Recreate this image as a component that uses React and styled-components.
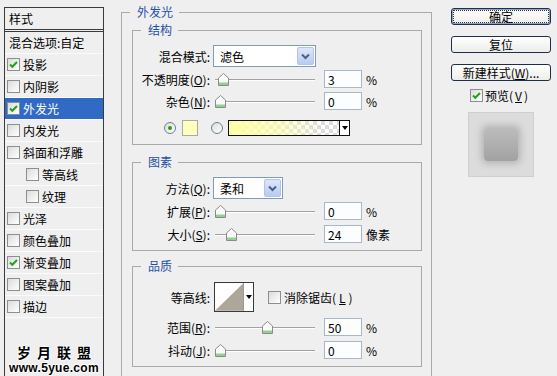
import React from 'react';
import styled, { createGlobalStyle, css } from 'styled-components';

const GlobalStyle = createGlobalStyle`
  body { margin: 0; background: #efefef; }
  * { box-sizing: border-box; }
`;

const Dialog = styled.div`
  width: 557px;
  height: 376px;
  overflow: hidden;
  display: flex;
  align-items: flex-start;
  background: #efefef;
  font-family: "Noto Sans CJK SC", "DejaVu Sans", sans-serif;
  font-size: 12px;
  color: #000;
`;

// left list of styles
const StyleList = styled.div`
  margin: 7px 0 0 4px;
  width: 100px;
  height: 380px;
  flex-shrink: 0;
  border: 1px solid #3a3a3a;
  display: flex;
  flex-direction: column;
`;

const ListHeader = styled.div`
  height: 24px;
  padding-left: 4px;
  display: flex;
  align-items: center;
  border-bottom: 3px double #3a3a3a;
`;

const ListRow = styled.div`
  height: 22px;
  display: flex;
  align-items: center;
  gap: 3px;
  padding-left: ${p => p.$pad}px;
  border-bottom: 1px solid #fbfbfb;
  ${p => p.$selected && css`
    background: #316ac5;
    color: #fff;
  `}
`;

const Watermark = styled.div`
  margin-top: 26px;
  text-align: center;
  line-height: 16px;
  font-weight: 700;
  text-shadow: 1px 0 0 #fff, -1px 0 0 #fff, 0 1px 0 #fff, 0 -1px 0 #fff;
`;

const WmTitle = styled.div`
  font-size: 14px;
  letter-spacing: 6px;
  padding-left: 6px;
`;

const WmUrl = styled.div`
  font-family: "Liberation Sans", Arial, sans-serif;
  font-size: 12px;
  letter-spacing: 0.3px;
`;

const Box = styled.span`
  width: 13px;
  height: 13px;
  flex-shrink: 0;
  display: inline-flex;
  align-items: center;
  justify-content: center;
  border: 1px solid #8a8f96;
  background: linear-gradient(135deg, #dcdcd6, #ffffff);
`;

function Check({ on }) {
  return (
    <Box>
      {on && (
        <svg width="11" height="11" viewBox="0 0 11 11">
          <path d="M2 5.5 L4.3 7.8 L9 3" fill="none" stroke="#21a121" strokeWidth="2" />
        </svg>
      )}
    </Box>
  );
}

// main panel
const Main = styled.div`
  margin-left: 17px;
  width: 311px;
  flex-shrink: 0;
`;

const Group = styled.fieldset`
  margin: ${p => p.$top}px 0 0;
  padding: 0;
  min-width: 0;
  border: 1px solid #a9a9a9;
`;

const Legend = styled.legend`
  margin-left: 8px;
  padding: 0 6px 0 7px;
  line-height: 14px;
  color: #1f4fa5;
`;

const GroupBody = styled.div`
  padding: ${p => p.$pad};
`;

const FieldRow = styled.div`
  display: flex;
  align-items: center;
  height: ${p => p.$h}px;
  margin-top: ${p => p.$mt || 0}px;
`;

const Label = styled.span`
  width: 77px;
  flex-shrink: 0;
  text-align: right;
  white-space: nowrap;
`;

const SelectBox = styled.div`
  margin-left: 3px;
  width: ${p => p.$w}px;
  height: 22px;
  border: 1px solid #7f9db9;
  background: #fff;
  display: flex;
  align-items: center;
  justify-content: space-between;
  padding: 1px 1px 1px 6px;
`;

const SelectArrow = styled.span`
  width: 17px;
  height: 18px;
  border: 1px solid #b4c4e6;
  border-radius: 2px;
  background: linear-gradient(#dde6fb, #b9cbf2);
  display: flex;
  align-items: center;
  justify-content: center;
`;

function Select({ w, children }) {
  return (
    <SelectBox $w={w}>
      <span>{children}</span>
      <SelectArrow>
        <svg width="9" height="7" viewBox="0 0 9 7">
          <path d="M1 1.5 L4.5 5 L8 1.5" fill="none" stroke="#4d6185" strokeWidth="2" />
        </svg>
      </SelectArrow>
    </SelectBox>
  );
}

const Track = styled.div`
  position: relative;
  margin-left: ${p => p.$ml || 5}px;
  width: ${p => p.$w || 100}px;
  height: 18px;
  flex-shrink: 0;
  &::before {
    content: "";
    position: absolute;
    left: 0;
    right: 0;
    top: 9px;
    border-top: 1px solid #a2a2a2;
    border-bottom: 1px solid #fff;
  }
`;

const Thumb = styled.svg`
  position: absolute;
  top: 3px;
`;

function Slider({ value, max, ml, w }) {
  const left = Math.round((value / max) * 94);
  return (
    <Track $ml={ml} $w={w}>
      <Thumb width="11" height="13" viewBox="0 0 11 13" style={{ left }}>
        <path d="M5.5 0.5 L10.5 5 L10.5 12.5 L0.5 12.5 L0.5 5 Z" fill="#fdfdfd" stroke="#8a8a8a" />
        <rect x="1" y="9.5" width="9" height="2.5" fill="#8fd18f" />
      </Thumb>
    </Track>
  );
}

const NumInput = styled.input`
  margin-left: 9px;
  width: 38px;
  height: 18px;
  padding: 0 0 0 3px;
  border: 1px solid #a9b8c8;
  background: #fbfdff;
  font: inherit;
  color: #000;
`;

const Unit = styled.span`
  margin-left: 4px;
`;

function SliderRow({ label, value, max, unit, mt, ml }) {
  return (
    <FieldRow $h={18} $mt={mt}>
      <Label>{label}</Label>
      <Slider value={value} max={max} ml={ml} />
      <NumInput readOnly value={value} />
      <Unit>{unit}</Unit>
    </FieldRow>
  );
}

const Radio = styled.span`
  width: 12px;
  height: 12px;
  flex-shrink: 0;
  margin-left: ${p => p.$ml}px;
  border-radius: 50%;
  border: 1px solid #6f7f93;
  background: linear-gradient(135deg, #dcdcd6, #fff);
  display: inline-flex;
  align-items: center;
  justify-content: center;
  &::after {
    content: "";
    width: 4px;
    height: 4px;
    border-radius: 50%;
    background: ${p => (p.$on ? '#21a121' : 'transparent')};
  }
`;

const Swatch = styled.span`
  margin-left: 6px;
  width: 16px;
  height: 16px;
  border: 1px solid #a8a8a8;
  background: #ffffbe;
`;

const GradientBar = styled.div`
  margin-left: 5px;
  width: 122px;
  height: 16px;
  border: 1px solid #111;
  display: flex;
`;

const GradientFill = styled.div`
  flex: 1;
  background:
    linear-gradient(to right, #ffffa8 0%, rgba(255, 255, 168, 0.6) 45%, rgba(255, 255, 168, 0) 85%),
    repeating-conic-gradient(#dcdcdc 0 25%, #ffffff 0 50%) 0 0 / 8px 8px;
`;

const DropPart = styled.div`
  width: 10px;
  border-left: 1px solid #111;
  background: #fff;
  display: flex;
  align-items: center;
  justify-content: center;
  &::after {
    content: "";
    border-left: 3px solid transparent;
    border-right: 3px solid transparent;
    border-top: 4px solid #000;
  }
`;

const Contour = styled.div`
  margin-left: 4px;
  width: 40px;
  height: 30px;
  border: 1px solid #3a3a3a;
  display: flex;
`;

const ContourArrow = styled(DropPart)`
  width: 10px;
  border-left: 1px solid #9a9a9a;
`;

const CheckLabel = styled.span`
  margin-left: ${p => p.$ml}px;
  display: inline-flex;
  align-items: center;
  gap: 3px;
`;

// right column
const Side = styled.div`
  margin-left: 19px;
  width: 100px;
  padding-top: 8px;
  display: flex;
  flex-direction: column;
  align-items: center;
`;

const Button = styled.div`
  width: 100px;
  height: 17px;
  margin-bottom: 11px;
  border: 1px solid #1f2f4a;
  border-radius: 3px;
  background: linear-gradient(#ffffff, #ececea);
  display: flex;
  align-items: center;
  justify-content: center;
  line-height: 15px;
  ${p => p.$default && css`
    box-shadow: inset 0 0 0 1px #8aa3c8;
    outline: 1px dotted #333;
    outline-offset: -3px;
  `}
`;

const PreviewCheck = styled.div`
  margin-top: -3px;
  margin-right: 4px;
  display: flex;
  align-items: center;
  gap: 2px;
  height: 13px;
`;

const PreviewBox = styled.div`
  margin-top: 10px;
  width: 66px;
  height: 65px;
  background: #dcdcdc;
  border: 1px solid #cfcfcf;
  display: flex;
  align-items: center;
  justify-content: center;
`;

const PreviewShape = styled.div`
  width: 34px;
  height: 33px;
  border-radius: 4px;
  background: linear-gradient(#bcbcbc, #a2a2a2);
  box-shadow: 0 0 6px 3px rgba(140, 140, 140, 0.45);
  filter: blur(0.6px);
`;

const styles = [
  { name: '投影', on: true },
  { name: '内阴影' },
  { name: '外发光', on: true, selected: true },
  { name: '内发光' },
  { name: '斜面和浮雕' },
  { name: '等高线', sub: true },
  { name: '纹理', sub: true },
  { name: '光泽' },
  { name: '颜色叠加' },
  { name: '渐变叠加', on: true },
  { name: '图案叠加' },
  { name: '描边' },
];

export default function App() {
  return (
    <Dialog>
      <GlobalStyle />
      <StyleList>
        <ListHeader>样式</ListHeader>
        <ListRow $pad={4}>混合选项:自定</ListRow>
        {styles.map(s => (
          <ListRow key={s.name} $pad={s.sub ? 21 : 2} $selected={s.selected}>
            <Check on={s.on} />
            {s.name}
          </ListRow>
        ))}
        <Watermark>
          <WmTitle>岁月联盟</WmTitle>
          <WmUrl>www.5yue.com</WmUrl>
        </Watermark>
      </StyleList>

      <Main>
        <Group $top={5}>
          <Legend>外发光</Legend>
          <GroupBody $pad="4px 9px 30px 10px">
            <Group $top={0}>
              <Legend>结构</Legend>
              <GroupBody $pad="8px 0 8px 0">
                <FieldRow $h={22}>
                  <Label>混合模式:</Label>
                  <Select w={103}>滤色</Select>
                </FieldRow>
                <SliderRow label={<>不透明度(<u>O</u>):</>} value={3} max={100} unit="%" mt={3} />
                <SliderRow label={<>杂色(<u>N</u>):</>} value={0} max={100} unit="%" mt={4} />
                <FieldRow $h={16} $mt={10}>
                  <Radio $ml={31} $on />
                  <Swatch />
                  <Radio $ml={13} />
                  <GradientBar>
                    <GradientFill />
                    <DropPart />
                  </GradientBar>
                </FieldRow>
              </GroupBody>
            </Group>

            <Group $top={10}>
              <Legend>图素</Legend>
              <GroupBody $pad="8px 0 7px 0">
                <FieldRow $h={22}>
                  <Label>方法(<u>Q</u>):</Label>
                  <Select w={70}>柔和</Select>
                </FieldRow>
                <SliderRow label={<>扩展(<u>P</u>):</>} value={0} max={100} unit="%" mt={3} />
                <SliderRow label={<>大小(<u>S</u>):</>} value={24} max={200} unit="像素" mt={5} />
              </GroupBody>
            </Group>

            <Group $top={8}>
              <Legend>品质</Legend>
              <GroupBody $pad="9px 0 7px 0">
                <FieldRow $h={30}>
                  <Label>等高线:</Label>
                  <Contour>
                    <svg width="29" height="28" viewBox="0 0 29 28">
                      <rect width="29" height="28" fill="#fff" />
                      <path d="M0 28 L29 0 L29 28 Z" fill="#ada699" />
                    </svg>
                    <ContourArrow />
                  </Contour>
                  <CheckLabel $ml={14}>
                    <Check />
                    消除锯齿(<u>L</u>)
                  </CheckLabel>
                </FieldRow>
                <SliderRow label={<>范围(<u>R</u>):</>} value={50} max={100} unit="%" mt={6} />
                <SliderRow label={<>抖动(<u>J</u>):</>} value={0} max={100} unit="%" mt={5} />
              </GroupBody>
            </Group>
          </GroupBody>
        </Group>
      </Main>

      <Side>
        <Button $default>确定</Button>
        <Button>复位</Button>
        <Button>新建样式(<u>W</u>)...</Button>
        <PreviewCheck>
          <Check on />
          预览(<u>V</u>)
        </PreviewCheck>
        <PreviewBox>
          <PreviewShape />
        </PreviewBox>
      </Side>
    </Dialog>
  );
}
